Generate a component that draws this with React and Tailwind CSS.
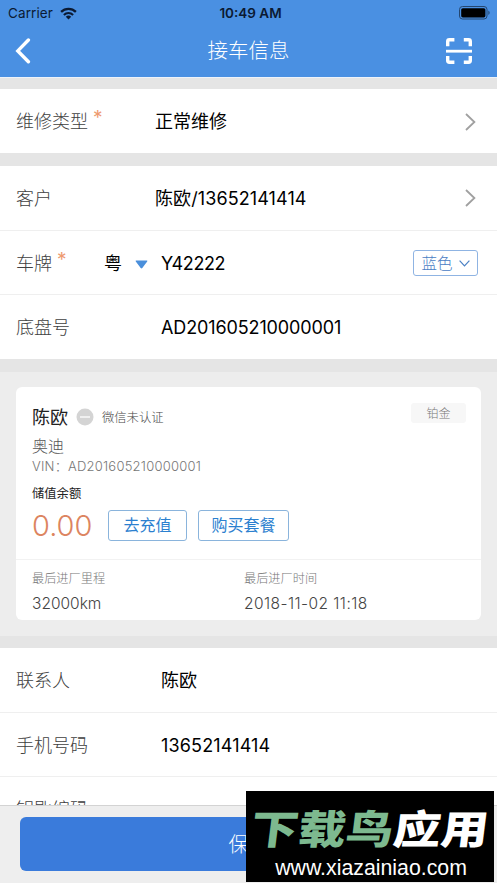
import React, { useState } from "react";
import clsx from "clsx";

const customer = {
  name: "陈欧",
  phone: "13652141414",
  car: "奥迪",
  vin: "AD201605210000001",
  balance: "0.00",
  level: "铂金",
  mileage: "32000km",
  lastVisit: "2018-11-02 11:18",
};

/* ================= ICONS ================= */
const WifiIcon = () => (
  <svg width="17" height="13" viewBox="0 0 17 13" fill="none" stroke="#0b1a33">
    <path d="M1.1 4.9a10.4 10.4 0 0 1 14.8 0" strokeWidth="2.3" />
    <path d="M3.9 7.9a6.5 6.5 0 0 1 9.2 0" strokeWidth="2.1" />
    <path d="M8.5 12.6 5.8 9.8a3.9 3.9 0 0 1 5.4 0z" fill="#0b1a33" stroke="none" />
  </svg>
);

const BatteryIcon = () => (
  <svg width="32" height="14" viewBox="0 0 32 14">
    <rect x="0.5" y="0.5" width="27.5" height="12.5" rx="3" fill="none" stroke="#24466f" />
    <rect x="2.2" y="2.2" width="24.2" height="9.2" rx="1.6" fill="#000" />
    <path d="M29.4 4.6c1.6.8 1.6 3.6 0 4.4z" fill="#24466f" />
  </svg>
);

const BackIcon = () => (
  <svg width="16" height="26" viewBox="0 0 16 26" fill="none" stroke="#fff" strokeWidth="3.4">
    <path d="M13.4 2 2.8 12.9l10.6 10.8" strokeLinecap="round" strokeLinejoin="miter" />
  </svg>
);

const ScanIcon = () => (
  <svg width="26" height="26" viewBox="0 0 26 26" fill="none" stroke="#fff">
    <path
      d="M1.7 8.2V3.4q0-1.7 1.7-1.7H8.4M17.8 1.7h4.8q1.7 0 1.7 1.7v4.8M24.3 18v4.6q0 1.7-1.7 1.7h-4.8M8.4 24.3H3.4q-1.7 0-1.7-1.7V18"
      strokeWidth="3.4"
    />
    <path d="M0 13.2h26" strokeWidth="2.8" />
  </svg>
);

const Arrow = () => (
  <svg className="ml-auto" width="11" height="18" viewBox="0 0 11 18" fill="none" stroke="#a0a0a0" strokeWidth="1.8">
    <path d="M1 1l8.4 8L1 17" />
  </svg>
);

/* ================= FORM ROWS ================= */
const Gap = ({ className }) => <div className={clsx("bg-[#e5e5e5]", className)} />;

const Row = ({ label, required, last, wide, prefix, value, valueClass, children }) => (
  <div
    className={clsx(
      "flex items-center bg-white pt-px pr-[21px] pl-4 text-[18px]",
      last ? "h-16" : "h-[64.7px] border-b border-[#efefef]"
    )}
  >
    <div className={clsx("flex shrink-0 items-center", wide ? "w-[145px]" : "w-[139px]")}>
      <span className="font-light text-[#404040]">{label}</span>
      {required && (
        <span className="mb-[7px] ml-[5px] text-[19px] leading-6 text-[#ee9a70]">*</span>
      )}
      {prefix}
    </div>
    <span className={clsx("text-black", valueClass)}>{value}</span>
    {children}
  </div>
);

const App = () => {
  const [province] = useState("粤");
  const [color] = useState("蓝色");

  return (
    <div className="relative flex h-[883px] w-[497px] flex-col overflow-hidden bg-white font-['Inter','Noto_Sans_CJK_SC',sans-serif]">
      {/* ================= HEADER ================= */}
      <header className="h-[77px] shrink-0 bg-[#4a90e2]">
        <div className="grid h-[26px] grid-cols-[1fr_auto_1fr] items-center pr-1.5 pl-2 text-[13.5px] text-[#0b1a33]">
          <div className="flex items-center gap-[7px]">
            <span className="tracking-[0.1px]">Carrier</span>
            <WifiIcon />
          </div>
          <span className="pl-0.5 text-center font-semibold whitespace-nowrap">10:49 AM</span>
          <div className="flex justify-end">
            <BatteryIcon />
          </div>
        </div>
        <div className="grid h-[50px] grid-cols-[1fr_auto_1fr] items-center pr-[25px] pl-[15px]">
          <BackIcon />
          <h1 className="pt-px pl-[10px] text-[20.5px] font-light text-white">接车信息</h1>
          <div className="flex justify-end">
            <ScanIcon />
          </div>
        </div>
      </header>

      {/* ================= CONTENT ================= */}
      <main className="min-h-0 flex-1 overflow-hidden">
        <Gap className="h-3 border-t border-[#edf3fa]" />
        <Row label="维修类型" required value="正常维修" last>
          <Arrow />
        </Row>
        <Gap className="h-[13px]" />
        <Row label="客户" value={`${customer.name}/${customer.phone}`} valueClass="tracking-[0.1px]">
          <Arrow />
        </Row>
        <Row
          label="车牌"
          required
          wide
          value="Y42222"
          valueClass="tracking-[-0.4px]"
          prefix={
            <span className="mr-[13px] ml-auto flex items-center gap-[13px]">
              {province}
              <svg className="mt-0.5" width="13" height="9" viewBox="0 0 13 9" fill="#4a8fdb">
                <path d="M1.2.4h10.6q1 .2.4 1L7.3 8q-.8.9-1.6 0L.8 1.4Q.2.6 1.2.4z" />
              </svg>
            </span>
          }
        >
          <button className="-mr-0.5 ml-auto flex h-[26px] w-[65px] items-center justify-center gap-[6px] rounded-[3px] border border-[#8fb4e3] pt-px text-[15.5px] font-light text-[#4a80c4]">
            {color}
            <svg width="11" height="7" viewBox="0 0 11 7" fill="none" stroke="#4a80c4" strokeWidth="1.2">
              <path d="M.6.6l4.9 5.2L10.4.6" />
            </svg>
          </button>
        </Row>
        <Row label="底盘号" wide value={customer.vin} valueClass="tracking-[-0.12px]" last />
        <Gap className="h-[12.6px]" />

        {/* CUSTOMER CARD */}
        <section className="h-[264px] bg-[#ededed] px-4 pt-[15.5px]">
          <div className="h-[232.5px] rounded-[6px] bg-white">
            <div className="h-[172.5px] border-b border-[#f2f2f2] px-4 pt-4">
              <div className="flex h-7 items-center">
                <span className="pt-px text-[18px] text-[#222]">{customer.name}</span>
                <svg className="ml-2" width="18" height="18" viewBox="0 0 18 18">
                  <circle cx="9" cy="9" r="8.5" fill="#d4d4d4" />
                  <path d="M4 9h10" stroke="#fff" strokeWidth="1.3" />
                </svg>
                <span className="ml-2 pt-0.5 text-[12.3px] font-light text-[#444]">微信未认证</span>
                <span className="-mr-px mb-[9px] ml-auto flex h-5 w-[55px] items-center justify-center rounded-[3px] bg-[#f7f7f7] pt-0.5 text-[12px] font-light text-[#777]">
                  {customer.level}
                </span>
              </div>
              <p className="h-7 pt-px text-[16px] leading-7 font-light text-[#555]">{customer.car}</p>
              <p className="h-[14px] text-[13px] leading-[14px] font-light tracking-[0.23px] text-[#777]">
                VIN：{customer.vin}
              </p>
              <p className="mt-[10px] h-[22px] text-[12.3px] leading-[22px] text-[#222]">储值余额</p>
              <div className="mt-[5px] flex h-[30px] items-center">
                <span className="w-[76px] text-[29px] font-light text-[#dc8460]">{customer.balance}</span>
                <button className="h-[31px] w-[79px] rounded-[3px] border border-[#8ab4dc] text-[16px] text-[#2b80cf]">
                  去充值
                </button>
                <button className="ml-[11px] h-[31px] w-[91px] rounded-[3px] border border-[#8ab4dc] text-[16px] text-[#2b80cf]">
                  购买套餐
                </button>
              </div>
            </div>
            <div className="grid grid-cols-[212px_1fr] px-4 pt-2">
              <div>
                <p className="text-[12.2px] leading-[22px] font-light text-[#777]">最后进厂里程</p>
                <p className="text-[15.5px] leading-[28px] font-light text-[#444]">{customer.mileage}</p>
              </div>
              <div>
                <p className="text-[12.2px] leading-[22px] font-light text-[#777]">最后进厂时间</p>
                <p className="text-[15.5px] leading-[28px] font-light tracking-[0.45px] text-[#444]">
                  {customer.lastVisit}
                </p>
              </div>
            </div>
          </div>
        </section>
        <Gap className="h-3" />

        <Row label="联系人" wide value={customer.name} />
        <Row label="手机号码" wide value={customer.phone} valueClass="tracking-[0.15px]" />
        <Row label="钥匙编码" wide />
      </main>

      {/* ================= FOOTER ================= */}
      <footer className="h-[78px] shrink-0 border-t border-[#d3d3d3] bg-[#eee] px-[19.5px] pt-[11px]">
        <button className="h-[54px] w-full rounded-[6px] bg-[#3a7bdb] pt-0.5 text-[20px] font-light text-white">
          保存
        </button>
      </footer>

      {/* WATERMARK */}
      <div className="absolute top-[791px] left-[246px] flex h-[91px] w-[248px] flex-col items-center bg-black text-white">
        <p className="mt-[17px] -skew-x-6 scale-y-[0.84] text-[47.5px] leading-[44px] font-black whitespace-nowrap">
          <span className="text-[#7db98f]">下载鸟</span>应用
        </p>
        <p className="mt-[4px] pl-0.5 font-['Liberation_Sans',sans-serif] text-[21.3px] leading-6">
          www.xiazainiao.com
        </p>
      </div>
    </div>
  );
};

export default App;
